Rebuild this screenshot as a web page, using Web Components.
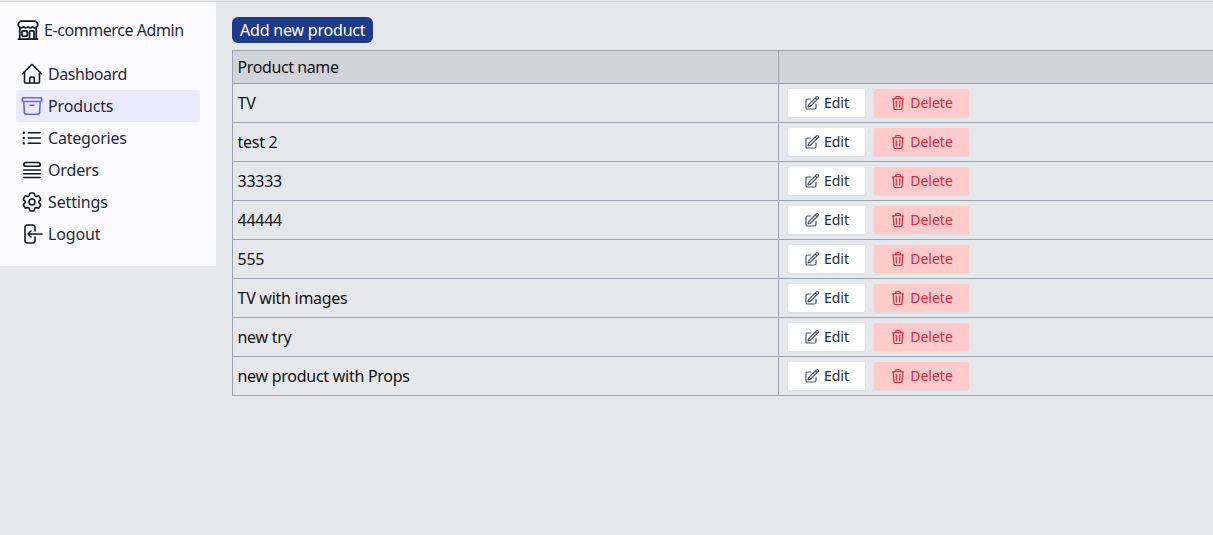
<!DOCTYPE html>
<html><head><meta charset="utf-8"><style>
html,body{margin:0;padding:0;height:535px;overflow:hidden;background:#e5e7eb;font-family:"Noto Sans",sans-serif;font-size:16px;color:#111827}
</style></head><body>
<admin-app></admin-app>
<script>
const I={
shop:'<path stroke-linecap="round" stroke-linejoin="round" d="M13.5 21v-7.5a.75.75 0 0 1 .75-.75h3a.75.75 0 0 1 .75.75V21m-4.5 0H2.36m11.14 0H18m0 0h3.64m-1.39 0V9.349M3.75 21V9.349m0 0a3.001 3.001 0 0 0 3.75-.615A2.993 2.993 0 0 0 9.75 9.75c.896 0 1.7-.393 2.25-1.016a2.993 2.993 0 0 0 2.25 1.016c.896 0 1.7-.393 2.25-1.016a3.001 3.001 0 0 0 3.75.614m-16.5 0a3.004 3.004 0 0 1-.621-4.72l1.189-1.19A1.5 1.5 0 0 1 5.378 3h13.243a1.5 1.5 0 0 1 1.06.44l1.19 1.189a3 3 0 0 1-.621 4.72M6.75 18h3.75a.75.75 0 0 0 .75-.75V13.5a.75.75 0 0 0-.75-.75H6.75a.75.75 0 0 0-.75.75v3.75c0 .414.336.75.75.75Z"/>',
home:'<path stroke-linecap="round" stroke-linejoin="round" d="m2.25 12 8.954-8.955c.44-.439 1.152-.439 1.591 0L21.75 12M4.5 9.75v10.125c0 .621.504 1.125 1.125 1.125H9.75v-4.875c0-.621.504-1.125 1.125-1.125h2.25c.621 0 1.125.504 1.125 1.125V21h4.125c.621 0 1.125-.504 1.125-1.125V9.75M8.25 21h8.25"/>',
box:'<path stroke-linecap="round" stroke-linejoin="round" d="m20.25 7.5-.625 10.632a2.25 2.25 0 0 1-2.247 2.118H6.622a2.25 2.25 0 0 1-2.247-2.118L3.75 7.5M10 11.25h4M3.375 7.5h17.25c.621 0 1.125-.504 1.125-1.125v-1.5c0-.621-.504-1.125-1.125-1.125H3.375c-.621 0-1.125.504-1.125 1.125v1.5c0 .621.504 1.125 1.125 1.125Z"/>',
list:'<path stroke-linecap="round" stroke-linejoin="round" d="M8.25 6.75h12M8.25 12h12m-12 5.25h12M3.75 6.75h.007v.008H3.75V6.75Zm.375 0a.375.375 0 1 1-.75 0 .375.375 0 0 1 .75 0ZM3.75 12h.007v.008H3.75V12Zm.375 0a.375.375 0 1 1-.75 0 .375.375 0 0 1 .75 0Zm-.375 5.25h.007v.008H3.75v-.008Zm.375 0a.375.375 0 1 1-.75 0 .375.375 0 0 1 .75 0Z"/>',
queue:'<path stroke-linecap="round" stroke-linejoin="round" d="M3.75 12h16.5m-16.5 3.75h16.5m-16.5 3.75h16.5M5.625 4.5h12.75a1.875 1.875 0 0 1 0 3.75H5.625a1.875 1.875 0 0 1 0-3.75Z"/>',
gear:'<path stroke-linecap="round" stroke-linejoin="round" d="M9.594 3.94c.09-.542.56-.94 1.11-.94h2.593c.55 0 1.02.398 1.11.94l.213 1.281c.063.374.313.686.645.87.074.04.147.083.22.127.325.196.72.257 1.075.124l1.217-.456a1.125 1.125 0 0 1 1.37.49l1.296 2.247a1.125 1.125 0 0 1-.26 1.431l-1.003.827c-.293.241-.438.613-.43.992a7.723 7.723 0 0 1 0 .255c-.008.378.137.75.43.991l1.004.827c.424.35.534.955.26 1.43l-1.298 2.247a1.125 1.125 0 0 1-1.369.491l-1.217-.456c-.355-.133-.75-.072-1.076.124a6.47 6.47 0 0 1-.22.128c-.331.183-.581.495-.644.869l-.213 1.281c-.09.543-.56.94-1.11.94h-2.594c-.55 0-1.019-.398-1.11-.94l-.213-1.281c-.062-.374-.312-.686-.644-.87a6.52 6.52 0 0 1-.22-.127c-.325-.196-.72-.257-1.076-.124l-1.217.456a1.125 1.125 0 0 1-1.369-.49l-1.297-2.247a1.125 1.125 0 0 1 .26-1.431l1.004-.827c.292-.24.437-.613.43-.991a6.932 6.932 0 0 1 0-.255c.007-.38-.138-.751-.43-.992l-1.004-.827a1.125 1.125 0 0 1-.26-1.43l1.297-2.247a1.125 1.125 0 0 1 1.37-.491l1.216.456c.356.133.751.072 1.076-.124.072-.044.146-.086.22-.128.332-.183.582-.495.644-.869l.214-1.28Z"/><path stroke-linecap="round" stroke-linejoin="round" d="M15 12a3 3 0 1 1-6 0 3 3 0 0 1 6 0Z"/>',
logout:'<path stroke-linecap="round" stroke-linejoin="round" d="M15 9V5.25A2.25 2.25 0 0 0 12.75 3h-5.5A2.25 2.25 0 0 0 5 5.25v13.5A2.25 2.25 0 0 0 7.25 21h5.5A2.25 2.25 0 0 0 15 18.75V15M11 9l-3 3m0 0 3 3m-3-3h14"/>',
pencil:'<path stroke-linecap="round" stroke-linejoin="round" d="m16.862 4.487 1.687-1.688a1.875 1.875 0 1 1 2.652 2.652L10.582 16.07a4.5 4.5 0 0 1-1.897 1.13L6 18l.8-2.685a4.5 4.5 0 0 1 1.13-1.897l8.932-8.931Zm0 0L19.5 7.125M18 14v4.75A2.25 2.25 0 0 1 15.75 21H5.25A2.25 2.25 0 0 1 3 18.75V8.25A2.25 2.25 0 0 1 5.25 6H10"/>',
trash:'<path stroke-linecap="round" stroke-linejoin="round" d="m14.74 9-.346 9m-4.788 0L9.26 9m9.968-3.21c.342.052.682.107 1.022.166m-1.022-.165L18.16 19.673a2.25 2.25 0 0 1-2.244 2.077H8.084a2.25 2.25 0 0 1-2.244-2.077L4.772 5.79m14.456 0a48.108 48.108 0 0 0-3.478-.397m-12 .562c.34-.059.68-.114 1.022-.165m0 0a48.11 48.11 0 0 1 3.478-.397m7.5 0v-.916c0-1.18-.91-2.164-2.09-2.201a51.964 51.964 0 0 0-3.32 0c-1.18.037-2.09 1.022-2.09 2.201v.916m7.5 0a48.667 48.667 0 0 0-7.5 0"/>'
};
const svg=(n,s,w=1.5)=>`<svg xmlns="http://www.w3.org/2000/svg" width="${s}" height="${s}" viewBox="0 0 24 24" fill="none" stroke="currentColor" stroke-width="${w}">${I[n]}</svg>`;
class Base extends HTMLElement{
  constructor(){super();this.attachShadow({mode:'open'}).innerHTML=this.markup();}
}
class NavItem extends Base{
  markup(){return `<style>
  :host{display:flex;align-items:center;gap:4px;height:32px;padding:0 4px;border-radius:2px;color:#1f2937;letter-spacing:var(--ls,-.15px)}
  :host([active]){background:#ebe9fc}
  svg{flex:none;display:block;color:#111827}
  :host([active]) svg{color:#6366f1}
  </style>${svg(this.getAttribute('icon'),24,1.6)}<slot></slot>`}
}
class SideBar extends Base{
  markup(){return `<style>
  :host{display:block;width:216px;height:264px;box-sizing:border-box;background:#fbfbff;padding:16px}
  .brand{display:flex;align-items:center;gap:4px;height:24px;margin-bottom:16px;color:#1f2937;letter-spacing:-.43px}
  .brand svg{display:block;color:#111827}
  nav{display:flex;flex-direction:column}
  </style><div class="brand">${svg('shop',24,1.75)}<span>E-commerce Admin</span></div><nav><slot></slot></nav>`}
}
class RowBtn extends Base{
  markup(){const d=this.getAttribute('kind')==='delete';return `<style>
  :host{display:inline-flex;align-items:center;justify-content:center;gap:4px;height:28px;box-sizing:border-box;border-radius:2px;font-size:14px;letter-spacing:0;
   box-shadow:0 1px 2px rgba(0,0,0,.05);background:${d?'#fecaca':'#fff'};color:${d?'#e5243b':'#1f2937'};width:${d?'95px':'77px'}}
  svg{display:block;${d?'':'color:#4b5563'}}
  span{padding-bottom:2px}
  </style>${svg(d?'trash':'pencil',16,1.8)}<span><slot></slot></span>`}
}
class ProductRow extends Base{
  markup(){return `<style>
  :host{display:grid;grid-template-columns:546px 1fr;height:39px;box-sizing:border-box;border-bottom:1px solid #9ca3af}
  .n{display:flex;align-items:center;padding-left:4.5px;border-right:1px solid #9ca3af;color:#111;letter-spacing:-.27px}
  .a{display:flex;align-items:center;gap:9px;padding-left:9px}
  </style><div class="n"><slot></slot></div><div class="a"><row-btn kind="edit">Edit</row-btn><row-btn kind="delete">Delete</row-btn></div>`}
}
class ProductTable extends Base{
  markup(){return `<style>
  :host{display:block;width:1100px;border:1px solid #9ca3af;border-bottom:0;box-sizing:border-box}
  .h{display:grid;grid-template-columns:546px 1fr;height:33px;box-sizing:border-box;background:#d1d5db;border-bottom:1px solid #9ca3af}
  .h div:first-child{display:flex;align-items:center;padding-left:4.5px;border-right:1px solid #9ca3af;color:#111;letter-spacing:-.4px}
  </style><div class="h"><div>Product name</div><div></div></div><slot></slot>`}
}
class AdminApp extends Base{
  markup(){const rows=['TV','test 2','33333','44444','555','TV with images','new try','new product with Props'];
  return `<style>
  :host{display:block;height:535px;box-sizing:border-box;padding-top:1px;overflow:hidden}
  .w{display:flex;align-items:flex-start;border-top:1px solid #d1d5db}
  main{flex:1;padding:15px 0 0 16px;min-width:0}
  .add{display:inline-flex;align-items:center;height:26px;padding:0 8px;background:#1e3a8a;color:#fff;border-radius:6px;margin-bottom:7px;letter-spacing:-.2px}
  .b{display:block}
  </style><div class="w"><side-bar>
  <nav-item icon="home" style="--ls:-.44px">Dashboard</nav-item><nav-item icon="box" active>Products</nav-item><nav-item icon="list" style="--ls:-.2px">Categories</nav-item><nav-item icon="queue">Orders</nav-item><nav-item icon="gear">Settings</nav-item><nav-item icon="logout">Logout</nav-item>
  </side-bar><main><div class="b"><a class="add">Add new product</a></div><product-table>${rows.map(r=>`<product-row>${r}</product-row>`).join('')}</product-table></main></div>`}
}
customElements.define('nav-item',NavItem);
customElements.define('side-bar',SideBar);
customElements.define('row-btn',RowBtn);
customElements.define('product-row',ProductRow);
customElements.define('product-table',ProductTable);
customElements.define('admin-app',AdminApp);
</script></body></html>
